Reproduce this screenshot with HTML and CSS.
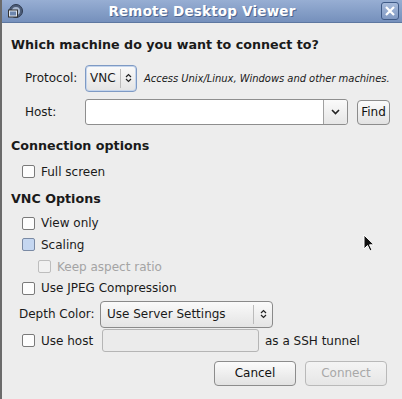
FILE: index.html
```html
<!DOCTYPE html>
<html lang="en">
<head>
    <meta charset="UTF-8">
    <title>Remote Desktop Viewer</title>
    <link rel="stylesheet" href="styles.css">
</head>
<body>
<div class="window">
    <div class="titlebar">
        <svg class="app-icon" width="16" height="16" viewBox="0 0 16 16">
            <circle cx="9" cy="8" r="6.5" fill="#4d5d78" stroke="#2e3a50"/>
            <circle cx="9" cy="8" r="4" fill="#a7b7cf"/>
            <rect x="1.5" y="7" width="9" height="7" fill="#dfe6f0" stroke="#333"/>
            <rect x="3" y="8.5" width="6" height="4" fill="#6d86ad"/>
        </svg>
        <div class="title">Remote Desktop Viewer</div>
        <div class="close-btn">
            <svg width="12" height="12" viewBox="0 0 12 12"><path d="M2 2 L10 10 M10 2 L2 10" stroke="#fff" stroke-width="2.2"/></svg>
        </div>
    </div>
    <div class="content">
        <h2>Which machine do you want to connect to?</h2>
        <div class="row proto-row">
            <span class="label">Protocol:</span>
            <div class="combo small">VNC<span class="sep"></span><span class="arrows">
                <svg width="7" height="10" viewBox="0 0 7 10"><path d="M1 4 L3.5 1.5 L6 4 M1 6 L3.5 8.5 L6 6" stroke="#222" stroke-width="1.2" fill="none"/></svg>
            </span></div>
            <span class="hint">Access Unix/Linux, Windows and other machines.</span>
        </div>
        <div class="row host-row">
            <span class="label">Host:</span>
            <div class="entry host-entry"><span class="drop">
                <svg width="9" height="6" viewBox="0 0 9 6"><path d="M1 1 L4.5 4.5 L8 1" stroke="#222" stroke-width="1.6" fill="none"/></svg>
            </span></div>
            <div class="button find">Find</div>
        </div>

        <h2 class="section">Connection options</h2>
        <label class="check"><span class="box"></span>Full screen</label>

        <h2 class="section">VNC Options</h2>
        <label class="check"><span class="box"></span>View only</label>
        <label class="check"><span class="box blue"></span>Scaling</label>
        <label class="check sub disabled"><span class="box"></span>Keep aspect ratio</label>
        <label class="check"><span class="box"></span>Use JPEG Compression</label>

        <div class="row depth-row">
            <span class="depth-label">Depth Color:</span>
            <div class="combo wide">Use Server Settings<span class="sep"></span><span class="arrows">
                <svg width="7" height="10" viewBox="0 0 7 10"><path d="M1 4 L3.5 1.5 L6 4 M1 6 L3.5 8.5 L6 6" stroke="#222" stroke-width="1.2" fill="none"/></svg>
            </span></div>
        </div>
        <div class="row ssh-row">
            <label class="check inline"><span class="box"></span>Use host</label>
            <div class="entry ssh-entry"></div>
            <span>as a SSH tunnel</span>
        </div>

        <div class="actions">
            <div class="button">Cancel</div>
            <div class="button disabled">Connect</div>
        </div>
    </div>
    <svg class="cursor" width="12" height="19" viewBox="0 0 12 19">
        <path d="M1 1 L1 15 L4.5 11.5 L7 17 L9 16 L6.5 10.8 L11 10.8 Z" fill="#111" stroke="#fff" stroke-width="1"/>
    </svg>
</div>
</body>
</html>
```

FILE: styles.css
```css
body {
    margin: 0;
    font-family: 'DejaVu Sans', sans-serif;
    font-size: 12px;
    color: #1a1a1a;
    background-color: #ededed;
}
.window {
    position: relative;
    width: 402px;
    height: 399px;
    border-left: 2px solid #6b6b6b;
    box-sizing: border-box;
    background-color: #ededed;
    overflow: hidden;
}
.titlebar {
    height: 22px;
    display: flex;
    align-items: center;
    background: linear-gradient(#97aed3, #7590bc);
    border-bottom: 1px solid #5d77a0;
    padding: 0 3px 0 5px;
}
.app-icon {
    flex: none;
}
.title {
    flex: 1;
    text-align: center;
    color: #fff;
    font-weight: bold;
    font-size: 13.5px;
    text-shadow: 1px 1px 0 #4e6690;
    letter-spacing: 0.2px;
}
.close-btn {
    width: 16px;
    height: 16px;
    border: 1px solid #3f5a86;
    border-radius: 3px;
    background: linear-gradient(#a7bbdb, #7f98c2);
    display: flex;
    align-items: center;
    justify-content: center;
}
.content {
    padding: 13px 12px 0 9px;
}
h2 {
    font-size: 12.7px;
    font-weight: bold;
    margin: 0;
    line-height: 18px;
}
.row {
    display: flex;
    align-items: center;
}
.proto-row {
    margin-top: 10px;
    padding-left: 14px;
    height: 28px;
}
.label {
    width: 60px;
}
.combo {
    height: 27px;
    border: 1px solid #8a8a8a;
    border-radius: 4px;
    background: linear-gradient(#fafafa, #e4e4e4);
    display: flex;
    align-items: center;
    padding-left: 4px;
    box-sizing: border-box;
}
.combo.small {
    width: 52px;
    border-color: #7e9ac4;
    box-shadow: inset 0 0 0 1px #c5d5ec;
}
.combo .sep {
    width: 1px;
    height: 19px;
    background-color: #bbb;
    margin-left: 4px;
}
.combo .arrows {
    flex: 1;
    display: flex;
    justify-content: center;
}
.combo.wide {
    width: 173px;
    padding-left: 6px;
}
.combo.wide .sep {
    margin-left: auto;
}
.combo.wide .arrows {
    flex: none;
    width: 18px;
}
.hint {
    font-style: italic;
    font-size: 10px;
    margin-left: 7px;
    white-space: nowrap;
    letter-spacing: -0.05px;
}
.host-row {
    margin-top: 7px;
    padding-left: 14px;
    height: 26px;
}
.entry {
    height: 26px;
    border: 1px solid #8e8e8e;
    border-radius: 3px;
    background-color: #fff;
    box-sizing: border-box;
}
.host-entry {
    width: 264px;
    display: flex;
    justify-content: flex-end;
}
.drop {
    width: 23px;
    border-left: 1px solid #a0a0a0;
    display: flex;
    align-items: center;
    justify-content: center;
    background: linear-gradient(#fafafa, #e6e6e6);
    border-radius: 0 3px 3px 0;
}
.button {
    height: 25px;
    border: 1px solid #8c8c8c;
    border-radius: 4px;
    background: linear-gradient(#fbfbfb, #e2e2e2);
    display: flex;
    align-items: center;
    justify-content: center;
    box-sizing: border-box;
    color: #111;
}
.find {
    width: 33px;
    margin-left: 9px;
    height: 25px;
}
h2.section {
    margin-top: 10px;
    margin-bottom: 5px;
}
.host-row + h2.section {
    margin-top: 12px;
    margin-bottom: 6px;
}
.check {
    display: flex;
    align-items: center;
    height: 21.6px;
    padding-left: 11px;
}
.check .box {
    width: 11px;
    height: 11px;
    border: 1px solid #7a7a7a;
    border-radius: 2px;
    background-color: #fdfdfd;
    margin-right: 6px;
}
.check .box.blue {
    background-color: #c5d7f1;
    border-color: #7a8aa4;
}
.check.sub {
    padding-left: 27px;
}
.check.disabled {
    color: #a4a4a4;
}
.check.disabled .box {
    border-color: #bdbdbd;
    background-color: #f1f1f1;
}
.check + h2.section {
    margin-top: 7px;
}
.depth-row {
    margin-top: 2px;
    padding-left: 8px;
    height: 27px;
}
.depth-label {
    width: 81px;
}
.ssh-row {
    margin-top: 1px;
    height: 24px;
}
.check.inline {
    height: auto;
    width: 80px;
}
.ssh-entry {
    width: 157px;
    height: 23px;
    background-color: #ebebeb;
    border-color: #b5b5b5;
    margin-right: 6px;
}
.actions {
    display: flex;
    justify-content: flex-end;
    gap: 9px;
    margin-top: 8px;
    padding-right: 3px;
}
.actions .button {
    width: 82px;
}
.button.disabled {
    color: #a8a8a8;
    border-color: #b9b9b9;
    background: linear-gradient(#f4f4f4, #e6e6e6);
}
.cursor {
    position: absolute;
    left: 361px;
    top: 234px;
}
```
